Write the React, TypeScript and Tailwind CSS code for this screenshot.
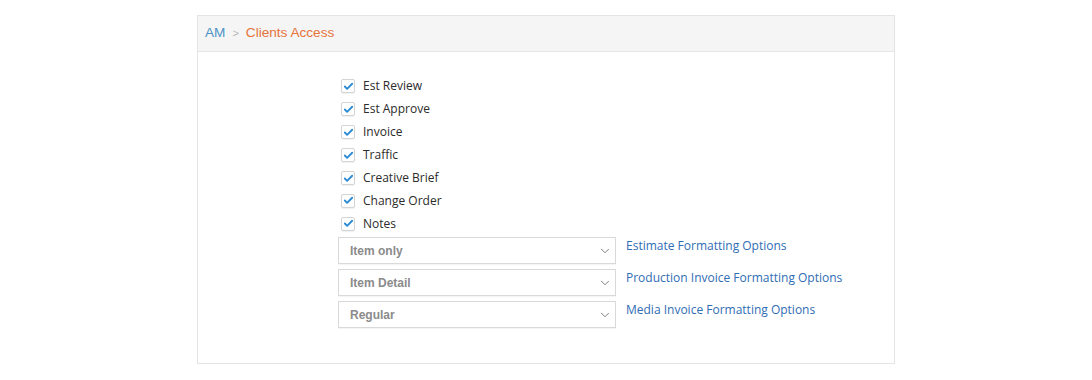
import { ChevronDown, Check } from "lucide-react";

const permissions = [
  "Est Review",
  "Est Approve",
  "Invoice",
  "Traffic",
  "Creative Brief",
  "Change Order",
  "Notes",
];

const formats = [
  { value: "Item only", label: "Estimate Formatting Options" },
  { value: "Item Detail", label: "Production Invoice Formatting Options" },
  { value: "Regular", label: "Media Invoice Formatting Options" },
];

export default function App() {
  return (
    <div className="min-h-[380px] w-full bg-white pt-[15px]">
      <div className="ml-[197px] w-[698px] h-[349px] border border-[#e4e4e4] bg-white">
        {/* breadcrumb */}
        <div className="h-[36px] flex items-center gap-[7px] pl-[7px] bg-[#f5f5f5] border-b border-[#e6e6e6] font-['Liberation_Sans',Arial,sans-serif] text-[13.6px]">
          <span className="text-[#4f93c6]">AM</span>
          <span className="text-[#b5b5b5] text-[11px]">&gt;</span>
          <span className="text-[#e5733a]">Clients Access</span>
        </div>

        <div className="pl-[140px] pt-[23px]">
          <div className="pl-[3px] flex flex-col">
            {permissions.map((p) => (
              <label
                key={p}
                className="h-[22.9px] flex items-center gap-[8px] font-['Open_Sans',sans-serif] text-[12px] text-[#2b2b2b]"
              >
                <span className="w-[14px] h-[14px] border border-[#d4d4d4] bg-white rounded-[2px] flex items-center justify-center shadow-[0_1px_1px_rgba(0,0,0,0.06)]">
                  <Check size={11} strokeWidth={4} className="text-[#2a8ad4]" />
                </span>
                {p}
              </label>
            ))}
          </div>

          <div className="mt-[2px] flex flex-col gap-[5px]">
            {formats.map((f) => (
              <div key={f.label} className="flex items-start gap-[10px]">
                <div className="w-[278px] h-[27px] border border-[#d9d9d9] bg-white flex items-center justify-between pl-[11px] pr-[3px] shadow-[0_1px_1px_rgba(0,0,0,0.04)]">
                  <span className="font-['Liberation_Sans',Arial,sans-serif] font-bold text-[12px] text-[#8b8b8b]">
                    {f.value}
                  </span>
                  <ChevronDown size={14} strokeWidth={1.7} className="text-[#7d7d7d]" />
                </div>
                <a className="font-['Open_Sans',sans-serif] text-[12px] text-[#2f6db4] leading-[18px]">
                  {f.label}
                </a>
              </div>
            ))}
          </div>
        </div>
      </div>
    </div>
  );
}
